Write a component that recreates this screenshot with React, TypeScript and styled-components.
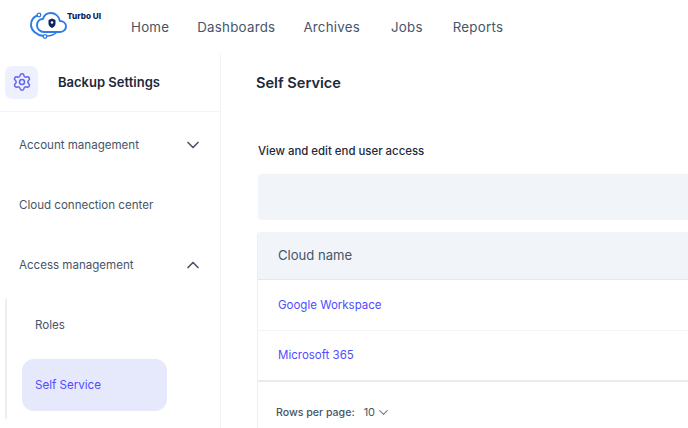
import React from 'react';
import styled, { createGlobalStyle } from 'styled-components';
import { ChevronDown, ChevronUp, Settings } from 'lucide-react';

const GlobalStyle = createGlobalStyle`
  html, body {
    margin: 0;
    padding: 0;
    height: 100%;
    background: #fff;
    overflow: hidden;
    font-family: Inter, "Liberation Sans", sans-serif;
  }
`;

const Page = styled.div`
  width: 688px;
  height: 428px;
  overflow: hidden;
  display: flex;
  flex-direction: column;
`;

const Header = styled.header`
  height: 53px;
  flex-shrink: 0;
  display: flex;
  align-items: flex-start;
`;

const Brand = styled.div`
  width: 131px;
  flex-shrink: 0;
  display: flex;
  align-items: flex-start;
  padding: 11px 0 0 30px;
  box-sizing: border-box;
`;

const LogoMark = styled.svg`
  margin-top: 1px;
  flex-shrink: 0;
`;

const BrandName = styled.span`
  font-size: 8.2px;
  font-weight: 800;
  line-height: 10px;
  color: #0b1f5c;
  white-space: nowrap;
`;

const Nav = styled.nav`
  display: flex;
  padding-top: 18px;
  gap: 28px;
`;

const NavItem = styled.a<{ $shift?: number }>`
  font-size: 13.3px;
  line-height: 18px;
  letter-spacing: 0.25px;
  color: #475569;
  margin-left: ${({ $shift }) => $shift ?? 0}px;
`;

const Body = styled.div`
  flex: 1;
  display: flex;
  min-height: 0;
`;

const Sidebar = styled.aside`
  width: 221px;
  flex-shrink: 0;
  border-right: 1px solid #f1f3f7;
  box-sizing: border-box;
`;

const SideHead = styled.div`
  height: 58px;
  display: flex;
  align-items: center;
  gap: 20px;
  padding-left: 5px;
  margin-bottom: 3px;
  border-bottom: 1px solid #f1f3f7;
`;

const GearBox = styled.div`
  width: 33px;
  height: 33px;
  border-radius: 7px;
  background: #eef0fe;
  display: flex;
  align-items: center;
  justify-content: center;
`;

const SideTitle = styled.div`
  font-size: 13px;
  font-weight: 600;
  color: #1e293b;
`;

const SideRow = styled.div`
  height: 60px;
  display: flex;
  align-items: center;
  justify-content: space-between;
  padding: 0 17px 0 19px;
  font-size: 11.55px;
  color: #475569;
`;

const SubList = styled.div`
  margin-left: 5px;
  border-left: 2px solid #eceef3;
  padding-left: 15px;
  height: 120px;
  margin-top: -4px;
`;

const SubItem = styled.div<{ $active?: boolean }>`
  width: 145px;
  height: 52px;
  margin-bottom: 8px;
  margin-top: 8px;
  border-radius: 12px;
  display: flex;
  align-items: center;
  padding-left: 13px;
  box-sizing: border-box;
  font-size: 11.6px;
  color: ${({ $active }) => ($active ? '#4f4dff' : '#475569')};
  background: ${({ $active }) => ($active ? '#e6e8fc' : 'transparent')};
`;

const Main = styled.main`
  flex: 1;
  min-width: 0;
  padding: 0 0 0 35px;
`;

const PageTitle = styled.h1`
  margin: 0;
  padding-top: 20px;
  font-size: 14.6px;
  line-height: 20px;
  font-weight: 600;
  color: #1e293b;
`;

const Subtitle = styled.div`
  margin: 50px 0 0 2px;
  font-size: 11.4px;
  line-height: 16px;
  font-weight: 500;
  color: #1e293b;
`;

const SearchBar = styled.div`
  margin: 15px -20px 0 2px;
  height: 46px;
  border-radius: 4px;
  background: #f1f4f9;
`;

const Table = styled.div`
  margin: 12px -20px 0 1px;
  border-left: 1px solid #eceef3;
  border-radius: 4px 0 0 0;
`;

const TableHead = styled.div`
  height: 46px;
  padding: 0 0 1px 20px;
  display: flex;
  align-items: center;
  font-size: 13.1px;
  color: #475569;
  background: #f1f4f9;
  border-bottom: 1px solid #e5e7eb;
  border-radius: 4px 0 0 0;
`;

const TableRow = styled.div<{ $last?: boolean }>`
  height: ${({ $last }) => ($last ? '48px' : '49px')};
  padding: 0 0 1px 20px;
  display: flex;
  align-items: center;
  font-size: 11.5px;
  color: #4f4dff;
  border-bottom: ${({ $last }) => ($last ? '2px solid #e9ebef' : '1px solid #f1f3f7')};
`;

const Pager = styled.div`
  height: 60px;
  padding: 0 0 2px 18px;
  display: flex;
  align-items: center;
`;

const PagerLabel = styled.span`
  font-size: 10.6px;
  font-weight: 500;
  color: #475569;
`;

const PagerValue = styled.span`
  font-size: 11px;
  color: #475569;
  margin-left: 9px;
  margin-right: 1px;
`;

const Logo = () => (
  <LogoMark width="37" height="27" viewBox="0 0 37 27" fill="none">
    <path
      d="M14 20 H30 C34 20 36 17 36 14.5 C36 11 33 9 30 9 C29 4 25 1 21 1 C17 1 14 3 13 7 C9 7 7 10 7 13.5 C7 17 10 20 14 20 Z"
      stroke="#2f7be6"
      strokeWidth="1.9"
      strokeLinejoin="round"
    />
    <path d="M7.5 3.5 C3 5 1 9 1 13 C1 18 6 23 13.5 24" stroke="#2f7be6" strokeWidth="1.9" strokeLinecap="round" />
    <path d="M17 24 C22 24 25 22 27 20" stroke="#2f7be6" strokeWidth="1.5" strokeLinecap="round" />
    <circle cx="9" cy="3" r="1.8" fill="#fff" stroke="#2f7be6" strokeWidth="1.3" />
    <circle cx="15" cy="24.5" r="1.8" fill="#fff" stroke="#2f7be6" strokeWidth="1.3" />
    <path d="M22 6.5 L25.5 8 V11.5 C25.5 13.5 24 15 22 16 C20 15 18.5 13.5 18.5 11.5 V8 Z" fill="#10245f" />
    <circle cx="22" cy="10.5" r="1.2" fill="#fff" />
  </LogoMark>
);

const App = () => (
  <Page>
    <GlobalStyle />
    <Header>
      <Brand>
        <Logo />
        <BrandName>Turbo UI</BrandName>
      </Brand>
      <Nav>
        <NavItem>Home</NavItem>
        <NavItem>Dashboards</NavItem>
        <NavItem>Archives</NavItem>
        <NavItem $shift={3}>Jobs</NavItem>
        <NavItem $shift={2}>Reports</NavItem>
      </Nav>
    </Header>
    <Body>
      <Sidebar>
        <SideHead>
          <GearBox><Settings size={20} color="#6366f1" strokeWidth={1.8} /></GearBox>
          <SideTitle>Backup Settings</SideTitle>
        </SideHead>
        <SideRow>
          Account management
          <ChevronDown size={20} color="#475569" />
        </SideRow>
        <SideRow>Cloud connection center</SideRow>
        <SideRow>
          Access management
          <ChevronUp size={20} color="#475569" />
        </SideRow>
        <SubList>
          <SubItem>Roles</SubItem>
          <SubItem $active>Self Service</SubItem>
        </SubList>
      </Sidebar>
      <Main>
        <PageTitle>Self Service</PageTitle>
        <Subtitle>View and edit end user access</Subtitle>
        <SearchBar />
        <Table>
          <TableHead>Cloud name</TableHead>
          <TableRow>Google Workspace</TableRow>
          <TableRow $last>Microsoft 365</TableRow>
          <Pager>
            <PagerLabel>Rows per page:</PagerLabel>
            <PagerValue>10</PagerValue>
            <ChevronDown size={15} color="#7b8494" />
          </Pager>
        </Table>
      </Main>
    </Body>
  </Page>
);

export default App;
